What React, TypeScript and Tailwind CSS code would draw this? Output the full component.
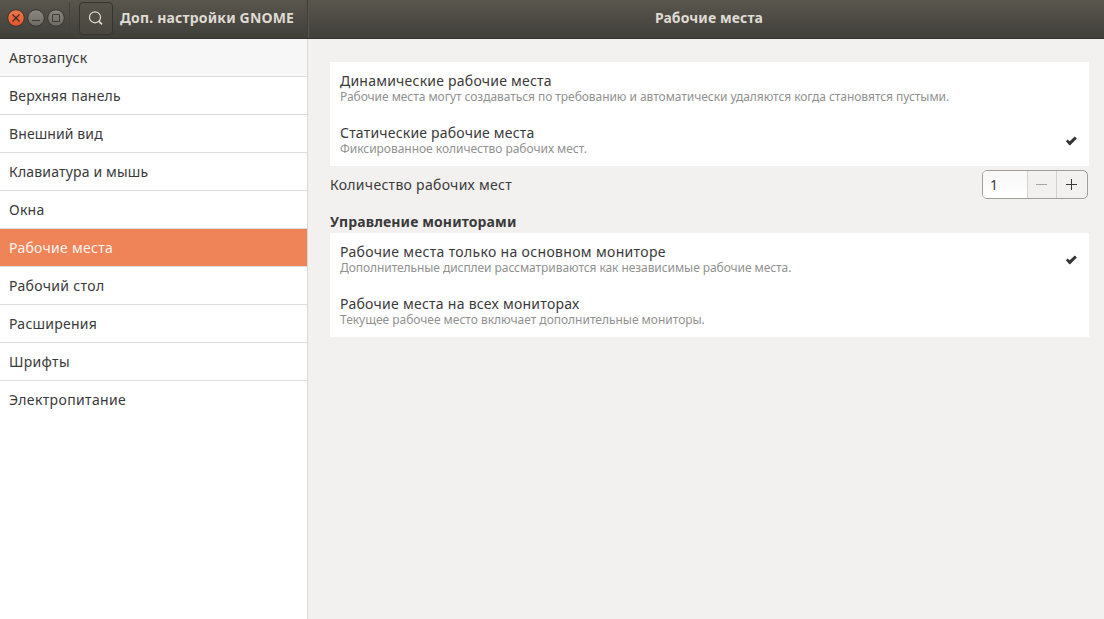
import { useState } from "react";

const sections = [
  { label: "Автозапуск", tracking: "tracking-[0.3px]" },
  { label: "Верхняя панель", tracking: "tracking-[0.2px]" },
  { label: "Внешний вид", tracking: "tracking-[0.1px]" },
  { label: "Клавиатура и мышь", tracking: "tracking-[0.17px]" },
  { label: "Окна", tracking: "tracking-[0.25px]" },
  { label: "Рабочие места", tracking: "tracking-[0.28px]" },
  { label: "Рабочий стол", tracking: "tracking-[0.33px]" },
  { label: "Расширения", tracking: "tracking-[0.25px]" },
  { label: "Шрифты", tracking: "tracking-[0.3px]" },
  { label: "Электропитание", tracking: "tracking-[0.36px]" },
];

function WindowControls() {
  return (
    <svg width="60" height="20" viewBox="0 0 60 20" fill="none" className="shrink-0">
      <defs>
        <linearGradient id="closeFill" x1="0" y1="0" x2="0" y2="1">
          <stop offset="0" stopColor="#f4794e" />
          <stop offset="1" stopColor="#e0522a" />
        </linearGradient>
        <linearGradient id="buttonFill" x1="0" y1="0" x2="0" y2="1">
          <stop offset="0" stopColor="#8a877f" />
          <stop offset="1" stopColor="#6c6a63" />
        </linearGradient>
      </defs>
      <circle cx="10" cy="10" r="8.3" fill="url(#closeFill)" stroke="#38352f" />
      <circle cx="30" cy="10" r="8.3" fill="url(#buttonFill)" stroke="#38352f" />
      <circle cx="50" cy="10" r="8.3" fill="url(#buttonFill)" stroke="#38352f" />
      <path d="M6.5 6.5l7 7M13.5 6.5l-7 7" stroke="#3b2a22" strokeWidth="1.3" />
      <path d="M26 12.5h8" stroke="#3c3b37" />
      <path d="M46.5 6.5h7v7h-7z" stroke="#3c3b37" />
    </svg>
  );
}

function Check() {
  return (
    <svg width="12" height="10" viewBox="0 0 12 10" className="mt-px shrink-0">
      <path d="M0.9 5.2L2.6 3.6L4.7 5.2L9.8 0.6L11.9 2.6L5.2 9.2H4.3Z" fill="#353535" />
    </svg>
  );
}

type OptionProps = {
  title: string;
  note: string;
  titleTracking: string;
  noteTracking: string;
  checked?: boolean;
};

function Option({ title, note, titleTracking, noteTracking, checked }: OptionProps) {
  return (
    <div className="flex h-[52px] items-center justify-between pr-3 pl-2.5 whitespace-nowrap">
      <div className="pb-px">
        <div className={`text-[14px] leading-[17px] text-[#3a3a3a] ${titleTracking}`}>
          <span>{title}</span>
        </div>
        <div className={`text-[12px] leading-[15px] text-[#919190] ${noteTracking}`}>
          <span>{note}</span>
        </div>
      </div>
      {checked && <Check />}
    </div>
  );
}

export default function App() {
  const [active] = useState(5);
  return (
    <div className="flex h-[619px] w-[1104px] flex-col overflow-hidden bg-[#f2f1f0] font-['Noto_Sans',sans-serif] text-[14px] text-[#3a3a3a]">
      <header className="flex h-[39px] shrink-0 border-b border-[#33322e] bg-linear-to-b from-[#59564d] to-[#403f3a] font-bold whitespace-nowrap text-[#dfdbd2]">
        <div className="flex w-[308px] items-center border-r border-[#3d3c37] pb-0.5 pl-1.5">
          <WindowControls />
          <div className="ml-[3px] h-8 w-px bg-[#45433d]" />
          <button className="ml-[9px] flex h-[33px] w-[34px] items-center justify-center rounded-[4px] border border-[#35342f] bg-linear-to-b from-[#56534a] to-[#49473f]">
            <svg width="16" height="16" viewBox="0 0 16 16" fill="none" stroke="#dfdbd2" strokeWidth="1.2">
              <circle cx="7" cy="7.3" r="5.5" />
              <path d="M11 11.3l3 3" strokeWidth="1.7" />
            </svg>
          </button>
          <span className="ml-[7px] pb-0.5 tracking-[0.18px]">Доп. настройки GNOME</span>
        </div>
        <div className="flex flex-1 items-center justify-center border-l border-[#5a5850] pb-1 pl-[5px]">
          <span className="tracking-[0.1px]">Рабочие места</span>
        </div>
      </header>
      <div className="flex min-h-0 flex-1">
        <nav className="w-[308px] shrink-0 border-r border-[#d9d9d8] bg-white">
          {sections.map(({ label, tracking }, i) => (
            <div
              key={label}
              className={`flex h-[38px] items-center border-b pl-[9px] ${
                i < sections.length - 1 ? "border-[#dcdcdc]" : "border-transparent"
              } ${i === active ? "bg-[#f08459] text-[#fdf3ee]" : i === 0 ? "bg-[#f7f7f7]" : ""} ${tracking}`}
            >
              <span>{label}</span>
            </div>
          ))}
        </nav>
        <main className="flex-1 pt-[23px] pr-[15px] pl-[22px]">
          <section className="bg-white">
            <Option
              title="Динамические рабочие места"
              note="Рабочие места могут создаваться по требованию и автоматически удаляются когда становятся пустыми."
              titleTracking="tracking-[0.23px]"
              noteTracking="tracking-[-0.052px]"
            />
            <Option
              title="Статические рабочие места"
              note="Фиксированное количество рабочих мест."
              titleTracking="tracking-[0.2px]"
              noteTracking="tracking-[-0.03px]"
              checked
            />
          </section>
          <div className="flex h-[37px] items-center justify-between pr-px">
            <span className="tracking-[0.29px]">Количество рабочих мест</span>
            <div className="flex h-[29px] w-[106px] overflow-hidden rounded-[5px] border border-[#9f9e9b] bg-[#f2f1f0]">
              <div className="flex w-[45px] items-center border-r border-[#d2d1cf] bg-linear-to-b from-[#f7f7f7] to-white pl-[7px]">
                1
              </div>
              <button className="flex w-[29px] items-center justify-center border-r border-[#d2d1cf] pr-px">
                <svg width="11" height="11" viewBox="0 0 11 11" stroke="#a5a4a2">
                  <path d="M0 5.5h11" />
                </svg>
              </button>
              <button className="flex flex-1 items-center justify-center pr-0.5">
                <svg width="11" height="11" viewBox="0 0 11 11" stroke="#3a3a3a">
                  <path d="M0 5.5h11M5.5 0v11" />
                </svg>
              </button>
            </div>
          </div>
          <h2 className="flex h-[30px] items-center pt-1.5 font-bold tracking-[0.12px]">
            <span>Управление мониторами</span>
          </h2>
          <section className="bg-white">
            <Option
              title="Рабочие места только на основном мониторе"
              note="Дополнительные дисплеи рассматриваются как независимые рабочие места."
              titleTracking="tracking-[0.33px]"
              noteTracking="tracking-[-0.07px]"
              checked
            />
            <Option
              title="Рабочие места на всех мониторах"
              note="Текущее рабочее место включает дополнительные мониторы."
              titleTracking="tracking-[0.27px]"
              noteTracking="tracking-[-0.02px]"
            />
          </section>
        </main>
      </div>
    </div>
  );
}
